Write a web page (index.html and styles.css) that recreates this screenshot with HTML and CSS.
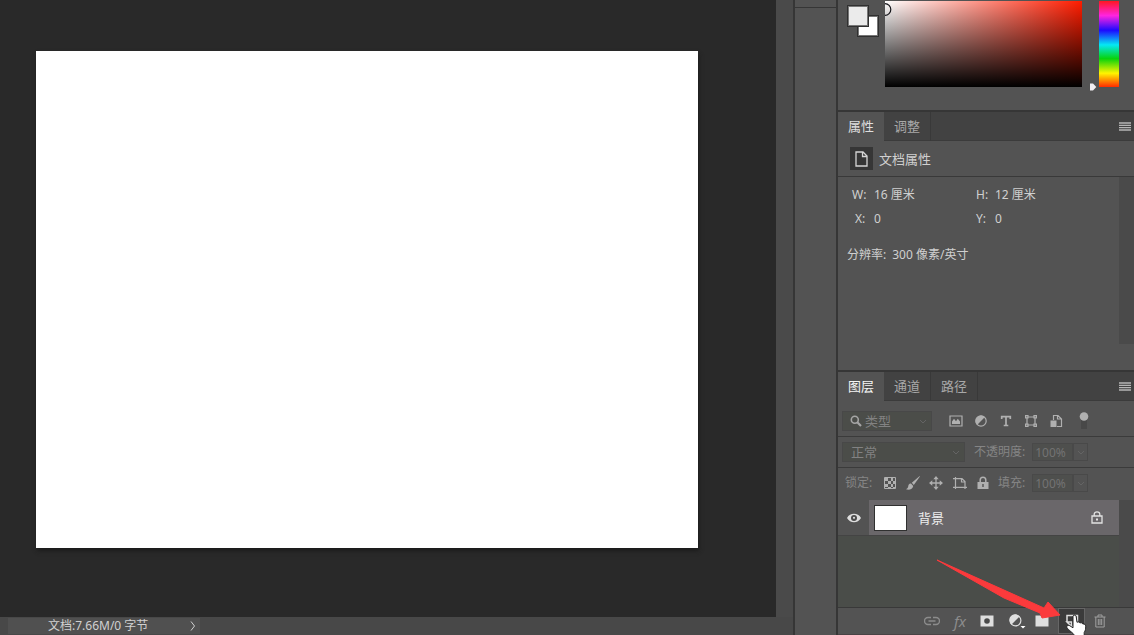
FILE: index.html
```html
<!DOCTYPE html>
<html lang="zh-CN">
<head>
<meta charset="utf-8">
<meta name="viewport" content="width=device-width, initial-scale=1">
<title>图层</title>
<link rel="stylesheet" href="styles.css">
</head>
<body>
<div class="app">
  <main class="document">
    <div class="workspace"><div class="canvas"></div></div>
    <div class="scroll-y"></div>
    <footer class="status">
      <div class="status-info">
        <span>文档:7.66M/0 字节</span>
        <button class="icon-button" aria-label="状态选项"><svg width="6" height="12" viewBox="0 0 6 12"><path d="M1 1.5 4.5 6 1 10.5" fill="none" stroke="currentColor"/></svg></button>
      </div>
    </footer>
  </main>
  <div class="dock"></div>
  <aside class="panels">
    <section class="color-panel">
      <div class="swatches">
        <button class="swatch background" aria-label="背景色"></button>
        <button class="swatch foreground" aria-label="前景色"></button>
      </div>
      <div class="spectrum"><svg class="picker" width="7" height="13" viewBox="0 0 7 13"><path d="M0 .7a5.8 5.8 0 0 1 0 11.6" fill="none" stroke="#15151a" stroke-width="1.2"/></svg></div>
      <div class="hue"><svg class="hue-mark" width="8" height="8" viewBox="0 0 8 8"><path d="M1 .5h3L7.300 4 4 7.500H1z" fill="#f2eef2"/></svg></div>
    </section>

    <section class="properties">
      <nav class="tabs">
        <button class="tab active">属性</button>
        <button class="tab">调整</button>
        <button class="icon-button menu" aria-label="面板菜单"><svg width="12" height="9" viewBox="0 0 12 9"><path d="M0 1h12M0 3.300h12M0 5.600h12M0 8h12" stroke="currentColor" stroke-width="1.300"/></svg></button>
      </nav>
      <header class="properties-head">
        <span class="doc-icon"><svg width="13" height="16" viewBox="0 0 13 16"><path d="M1 1h7l4 4v10H1zM7.500 1v4.500H12" fill="none" stroke="#d5d5d5" stroke-width="1.300"/></svg></span>
        <span>文档属性</span>
      </header>
      <div class="properties-body">
        <div class="properties-info">
          <dl class="metrics">
            <div><dt>W:</dt><dd>16 厘米</dd></div>
            <div><dt>H:</dt><dd>12 厘米</dd></div>
            <div><dt class="narrow">X:</dt><dd>0</dd></div>
            <div><dt>Y:</dt><dd>0</dd></div>
          </dl>
          <p class="resolution"><span>分辨率:</span> <span>300 像素/英寸</span></p>
        </div>
        <div class="track"></div>
      </div>
    </section>

    <section class="layers">
      <nav class="tabs">
        <button class="tab active strong">图层</button>
        <button class="tab">通道</button>
        <button class="tab">路径</button>
        <button class="icon-button menu" aria-label="面板菜单"><svg width="12" height="9" viewBox="0 0 12 9"><path d="M0 1h12M0 3.300h12M0 5.600h12M0 8h12" stroke="currentColor" stroke-width="1.300"/></svg></button>
      </nav>
      <div class="filter-row">
        <label class="field kind">
          <svg width="12" height="12" viewBox="0 0 12 12"><circle cx="4.800" cy="4.800" r="3.500" fill="none" stroke="#a5a5a5" stroke-width="1.600"/><path d="m7.300 7.300 3.700 3.700" stroke="#a5a5a5" stroke-width="2.200"/></svg>
          <select aria-label="筛选类型"><option>类型</option></select>
          <svg class="chevron" width="8" height="5" viewBox="0 0 8 5"><path d="m1 1 3 3 3-3" fill="none" stroke="currentColor"/></svg>
        </label>
        <div class="filters">
          <button class="icon-button" aria-label="像素图层"><svg width="14" height="14" viewBox="0 0 14 14"><path d="M1 2h12v10H1z" fill="none" stroke="currentColor" stroke-width="1.200"/><path d="M3 10V7.500L5 4.800l2 2.400 1.800-2.400L11 7.500V10z" fill="currentColor"/></svg></button>
          <button class="icon-button" aria-label="调整图层"><svg width="14" height="14" viewBox="0 0 14 14"><circle cx="7" cy="7" r="5.200" fill="none" stroke="currentColor" stroke-width="1.200"/><path d="M10.900 3.100A5.500 5.500 0 1 0 3.100 10.900z" fill="currentColor"/></svg></button>
          <button class="icon-button" aria-label="文字图层"><svg width="14" height="14" viewBox="0 0 14 14"><path d="M2.700 5V2.600h8.600V5M7 2.600v8.900M4.700 11.500h4.600" fill="none" stroke="currentColor" stroke-width="1.700"/></svg></button>
          <button class="icon-button" aria-label="形状图层"><svg width="14" height="14" viewBox="0 0 14 14"><path d="M3 3h8v8H3z" fill="none" stroke="currentColor" stroke-width="1.200"/><path d="M1 1h3.600v3.600H1zM9.400 1H13v3.600H9.400zM1 9.400h3.600V13H1zM9.400 9.400H13V13H9.400z" fill="currentColor"/><path d="M2.300 2.300h1v1h-1zM10.700 2.300h1v1h-1zM2.300 10.700h1v1h-1zM10.700 10.700h1v1h-1z" fill="#535353"/></svg></button>
          <button class="icon-button" aria-label="智能对象"><svg width="14" height="14" viewBox="0 0 14 14"><path d="M4.500 6V1.500H9L12.500 5v7.500H8M8.500 1.500V5h4" fill="none" stroke="currentColor" stroke-width="1.200"/><path d="M1.500 6.500h6V13h-6z" fill="currentColor"/></svg></button>
          <button class="icon-button toggle" aria-label="图层过滤开关"><svg width="10" height="18" viewBox="0 0 10 18"><path d="M2 7h6v10H2z" fill="#484848"/><circle cx="5" cy="4.500" r="4.300" fill="currentColor"/></svg></button>
        </div>
      </div>
      <div class="blend-row">
        <label class="field blend">
          <select aria-label="混合模式"><option>正常</option></select>
          <svg class="chevron" width="8" height="5" viewBox="0 0 8 5"><path d="m1 1 3 3 3-3" fill="none" stroke="currentColor"/></svg>
        </label>
        <div class="amount">
          <label for="opacity">不透明度:</label>
          <input id="opacity" type="text" value="100%">
          <button class="drop" aria-label="不透明度选项"><svg width="8" height="5" viewBox="0 0 8 5"><path d="m1 1 3 3 3-3" fill="none" stroke="currentColor"/></svg></button>
        </div>
      </div>
      <div class="lock-row">
        <span class="lock-label">锁定:</span>
        <div class="locks">
          <button class="icon-button" aria-label="锁定透明像素"><svg width="14" height="14" viewBox="0 0 14 14"><path d="M1.500 1.500h11v11h-11z" fill="none" stroke="currentColor"/><path d="M2 2h3v3H2zM8 2h2v3H8zM5 5h3v3H5zM10 5h2v3h-2zM2 8h3v3H2zM8 8h2v3H8zM5 11h3v1H5zM10 11h2v1h-2z" fill="currentColor"/></svg></button>
          <button class="icon-button" aria-label="锁定图像像素"><svg width="14" height="14" viewBox="0 0 14 14"><path d="M13.700 0 5.800 6.800l2 2.300L13.900.600zM5 7.500C3 7.300 2.300 9 2.200 10.500 2 12 1 12.800 0 13.200c3 1.200 7-.200 7.200-3.300z" fill="currentColor"/></svg></button>
          <button class="icon-button" aria-label="锁定位置"><svg width="14" height="14" viewBox="0 0 14 14"><path d="M7 2v10M2 7h10" stroke="currentColor" stroke-width="1.300"/><path d="m7 0 2.700 3.300H4.300zM7 14l2.700-3.300H4.300zM0 7l3.300-2.700v5.400zM14 7l-3.300-2.700v5.400z" fill="currentColor"/></svg></button>
          <button class="icon-button" aria-label="锁定画板"><svg width="16" height="14" viewBox="0 0 16 14"><path d="M3.500 1v12M1 2.600h9l3 3V13M1 11.400h14M9.500 3v3H13" fill="none" stroke="currentColor" stroke-width="1.200"/></svg></button>
          <button class="icon-button" aria-label="锁定全部"><svg width="12" height="14" viewBox="0 0 12 14"><path d="M3.200 6V4a2.800 2.800 0 0 1 5.600 0v2" fill="none" stroke="currentColor" stroke-width="1.500"/><path d="M.5 6h11v7H.5z" fill="currentColor"/><path d="M6 8v3" stroke="#535353" stroke-width="1.400"/></svg></button>
        </div>
        <div class="amount">
          <label for="fill">填充:</label>
          <input id="fill" type="text" value="100%">
          <button class="drop" aria-label="填充选项"><svg width="8" height="5" viewBox="0 0 8 5"><path d="m1 1 3 3 3-3" fill="none" stroke="currentColor"/></svg></button>
        </div>
      </div>
      <div class="layer-list">
        <div class="layer-rows">
          <div class="layer">
            <button class="icon-button eye" aria-label="显示图层"><svg width="14" height="10" viewBox="0 0 14 10"><path d="M0 5C3-.6 11-.6 14 5c-3 5.600-11 5.600-14 0z" fill="#dedede"/><circle cx="7" cy="5" r="3" fill="#4b4b4b"/><circle cx="7" cy="4.800" r="1.100" fill="#ddd"/></svg></button>
            <div class="layer-main">
              <span class="thumb"></span>
              <span class="layer-name">背景</span>
              <svg width="12" height="13" viewBox="0 0 12 13"><path d="M1 5h10v7H1zM3.200 5V3.200a2.800 2.400 0 0 1 5.600 0V5" fill="none" stroke="#e2e2e2" stroke-width="1.300"/><path d="M5 7.500h2v2H5z" fill="#e2e2e2"/></svg>
            </div>
          </div>
        </div>
        <div class="track"></div>
      </div>
      <footer class="actions">
        <div class="action-group">
          <button class="icon-button dim" aria-label="链接图层"><svg width="16" height="10" viewBox="0 0 16 10"><path d="M7 1.500H4a3.300 3.300 0 0 0 0 7h3M9 1.500h3a3.300 3.300 0 0 1 0 7H9M4.500 5h7" fill="none" stroke="currentColor" stroke-width="1.400"/></svg></button>
          <button class="icon-button dim fx" aria-label="图层样式">fx</button>
          <button class="icon-button" aria-label="图层蒙版"><svg width="14" height="12" viewBox="0 0 14 12"><path d="M.5.500h13v11H.5z" fill="currentColor"/><circle cx="7" cy="6" r="2.800" fill="#494949"/></svg></button>
          <button class="icon-button" aria-label="新建调整图层"><svg width="18" height="16" viewBox="0 0 18 16"><circle cx="7.500" cy="7.500" r="5.400" fill="none" stroke="currentColor" stroke-width="1.200"/><path d="M11.500 3.500a5.700 5.700 0 1 0-8 8z" fill="currentColor"/><path d="M12.500 13h5L15 15.500z" fill="#fff"/></svg></button>
        </div>
        <button class="icon-button" aria-label="新建组"><svg width="14" height="12" viewBox="0 0 14 12"><path d="M.5.500h5l1 1.500h7v9.500H.5z" fill="currentColor"/></svg></button>
        <button class="icon-button new-layer" aria-label="新建图层"><svg width="14" height="14" viewBox="0 0 14 14"><path d="M2 8V1.500h10.500v11H6.500L2 8h4.500v4" fill="none" stroke="currentColor" stroke-width="1.500"/></svg></button>
        <button class="icon-button trash" aria-label="删除图层"><svg width="12" height="14" viewBox="0 0 12 14"><path d="M.5 3h11M4 3V1h4v2M1.800 3v10h8.400V3M4.300 5v6M6 5v6M7.700 5v6" fill="none" stroke="currentColor"/></svg></button>
        <svg class="arrow" width="125" height="62" viewBox="0 0 125 62"><path d="M1 2 108 50l4-6 12 13-18 3-2-5L68 40z" fill="#fb3a3c" stroke="#fb3a3c" stroke-linejoin="round"/></svg>
        <svg class="cursor" width="24" height="22" viewBox="0 0 24 22"><path d="M8 2c.8-1.500 3-1 3.200.7l.8 5.600c1.300-.9 2.500-.2 2.900.7 1.400-.7 2.600 0 2.900 1 1.700-.4 2.900.6 2.900 2.200 0 2.800-.2 4.300-1.500 6.300V22H9.500c-.4-2.500-3.800-4-7.200-7.800-1.500-2 .5-3.600 2.600-2.400L8 13.800z" fill="#fff" stroke="#242424"/></svg>
      </footer>
    </section>
  </aside>
</div>
</body>
</html>
```

FILE: styles.css
```css
* { box-sizing: border-box; }

body {
  margin: 0;
  background: #535353;
  color: #d0d0d0;
  font: 12px/16px "Noto Sans", "Noto Sans CJK SC", sans-serif;
}

button, input, select {
  margin: 0;
  padding: 0;
  border: 0;
  border-radius: 0;
  background: none;
  color: inherit;
  font: inherit;
}

svg { display: block; flex: none; }

.app {
  display: grid;
  grid-template-columns: 1fr 43px 298px;
  height: 100vh;
  overflow: hidden;
}

.document {
  display: grid;
  grid-template: 1fr 18px / 1fr 17px;
  min-width: 0;
}

.workspace {
  display: flex;
  padding: 51px 78px 69px 36px;
  background: #292929;
}

.canvas {
  flex: 1;
  background: #fff;
  box-shadow: 1px 3px 4px #1c1c1c;
}

.scroll-y { background: #4a4a4a; }

.status {
  grid-column: 1 / -1;
  padding: 1px 0 1px 8px;
  background: #484848;
}

.status-info {
  display: flex;
  align-items: center;
  justify-content: space-between;
  width: 192px;
  height: 16px;
  padding: 0 4px 0 40px;
  background: #505050;
}

.icon-button {
  display: flex;
  align-items: center;
  justify-content: center;
}

.dock {
  border-left: 2px solid #363636;
  background: linear-gradient(#363636, #363636) 0 7px / 100% 1px no-repeat #535353;
}

.panels {
  display: flex;
  flex-direction: column;
  min-width: 0;
  border-left: 2px solid #363636;
}

.color-panel {
  display: flex;
  height: 110px;
  padding: 1px 15px 0 9px;
}

.swatches {
  display: grid;
  grid-template: 10px 12px 10px / 10px 12px 10px;
  flex: none;
  height: 32px;
  margin: 4px 6px 0 0;
}

.swatch {
  border: 1px solid #303030;
  outline: 1px solid #777;
  outline-offset: -2px;
}

.foreground { grid-area: 1 / 1 / 3 / 3; background: #ebebeb; }
.background { grid-area: 2 / 2 / 4 / 4; background: #fff; }

.spectrum {
  position: relative;
  flex: 1;
  height: 86px;
  background: linear-gradient(to top, #000, transparent), linear-gradient(to right, #fff, #ff1c00);
}

.picker { position: absolute; left: 0; top: 2px; }

.hue {
  position: relative;
  width: 20px;
  height: 86px;
  margin-left: 17px;
  background: linear-gradient(#ff1721, #ff24e0 17%, #1d09ff 34%, #05e8f4 51%, #08d30c 67%, #fff500 84%, #ff2b00);
}

.hue-mark { position: absolute; left: -10px; bottom: -4px; }

.properties, .layers { border-top: 2px solid #363636; }

.tabs {
  display: flex;
  flex: none;
  height: 29px;
  border-bottom: 1px solid #3b3b3b;
  background: #424242;
}

.tab {
  height: 29px;
  padding: 0 10px 2px;
  border-right: 1px solid #393939;
  color: #a8a8a8;
  font-size: 13px;
}

.tab.active { border-right: 0; background: #535353; color: #dedede; }
.tab.strong { color: #f5f5f5; }

.menu { margin: 0 3px 0 auto; color: #b5b5b5; }

.properties-head {
  display: flex;
  align-items: center;
  gap: 6px;
  height: 36px;
  padding-left: 12px;
  border-bottom: 1px solid #393939;
  font-size: 13px;
}

.doc-icon {
  display: grid;
  place-items: center;
  width: 23px;
  height: 23px;
  background: #363636;
}

.properties-body {
  display: flex;
  height: 193px;
}

.properties-info { flex: 1; padding: 10px 9px; }

.metrics {
  display: grid;
  grid-template-columns: 124px 1fr;
  gap: 8px 0;
  margin: 0 0 20px 5px;
}

.metrics div { display: flex; }
.metrics dt { min-width: 19px; }
.metrics div:nth-child(odd) dt { min-width: 22px; }
.metrics dt.narrow { padding-left: 3px; }
.metrics dd { margin: 0; }

.resolution {
  display: flex;
  gap: 6px;
  margin: 0;
}

.track { width: 15px; background: #4a4a4a; }
.properties-body .track { height: 167px; }

.layers {
  display: flex;
  flex: 1;
  flex-direction: column;
  min-height: 0;
}

.filter-row, .blend-row, .lock-row {
  display: flex;
  align-items: center;
  flex: none;
  height: 31px;
  padding-left: 4px;
  color: #858585;
}

.filter-row { height: 36px; padding-top: 5px; border-bottom: 1px solid #3b3b3b; }
.blend-row { border-bottom: 1px solid #3b3b3b; }

.field {
  display: flex;
  align-items: center;
  height: 20px;
  padding: 0 4px 0 8px;
  border: 1px solid #484848;
  background: #4b4d49;
  color: #777;
}

.field select {
  flex: 1;
  min-width: 0;
  appearance: none;
  color: #828282;
  font-size: 13px;
}

.chevron { color: #646464; }

.kind { gap: 3px; width: 90px; padding-left: 7px; }
.blend { width: 123px; }

.filters {
  display: flex;
  gap: 11px;
  margin-left: 17px;
  color: #b0b0b0;
}

.toggle { margin-left: 5px; }

.amount {
  display: flex;
  align-items: center;
  height: 18px;
  margin-left: 9px;
  color: #858585;
}

.amount label { margin-right: 7px; }

.amount input {
  width: 41px;
  height: 18px;
  padding: 0 2px;
  border: 1px solid #494949;
  background: #4e4f4d;
  color: #737373;
}

.drop {
  display: grid;
  place-items: center;
  width: 15px;
  height: 18px;
  border: 1px solid #494949;
  color: #646464;
}

.lock-row { height: 32px; padding: 0 0 2px 7px; }
.lock-label { width: 38px; }
.locks { display: flex; gap: 9px; color: #b0b0b0; }

.layer-list {
  display: flex;
  flex: 1;
  min-height: 0;
  background: #4a4d49;
}

.layer-rows { flex: 1; }

.layer {
  display: flex;
  height: 36px;
  border-bottom: 1px solid #444;
  background: #535353;
}

.eye { width: 31px; }

.layer-main {
  display: flex;
  align-items: center;
  flex: 1;
  padding: 0 16px 0 5px;
  background: #6a676a;
}

.thumb {
  width: 33px;
  height: 26px;
  border: 1px solid #303030;
  background: #fff;
}

.layer-name { flex: 1; margin-left: 11px; color: #eee; font-size: 13px; }

.actions {
  position: relative;
  display: flex;
  align-items: center;
  justify-content: flex-end;
  flex: none;
  gap: 9px;
  height: 28px;
  padding: 0 28px;
  border-top: 1px solid #393939;
  border-bottom: 1px solid #494345;
  color: #dedede;
}

.action-group {
  display: flex;
  align-items: center;
  gap: 14px;
}

.dim { color: #8c8c8c; }
.trash { color: #a0a0a0; }
.fx { font: italic 15px/16px "Noto Sans", sans-serif; }

.new-layer {
  width: 27px;
  height: 26px;
  border: 1px solid #666;
  background: #3b3b3b;
}

.arrow { position: absolute; right: 73px; bottom: 14px; pointer-events: none; }
.cursor { position: absolute; right: 45px; bottom: -2px; pointer-events: none; }
```
